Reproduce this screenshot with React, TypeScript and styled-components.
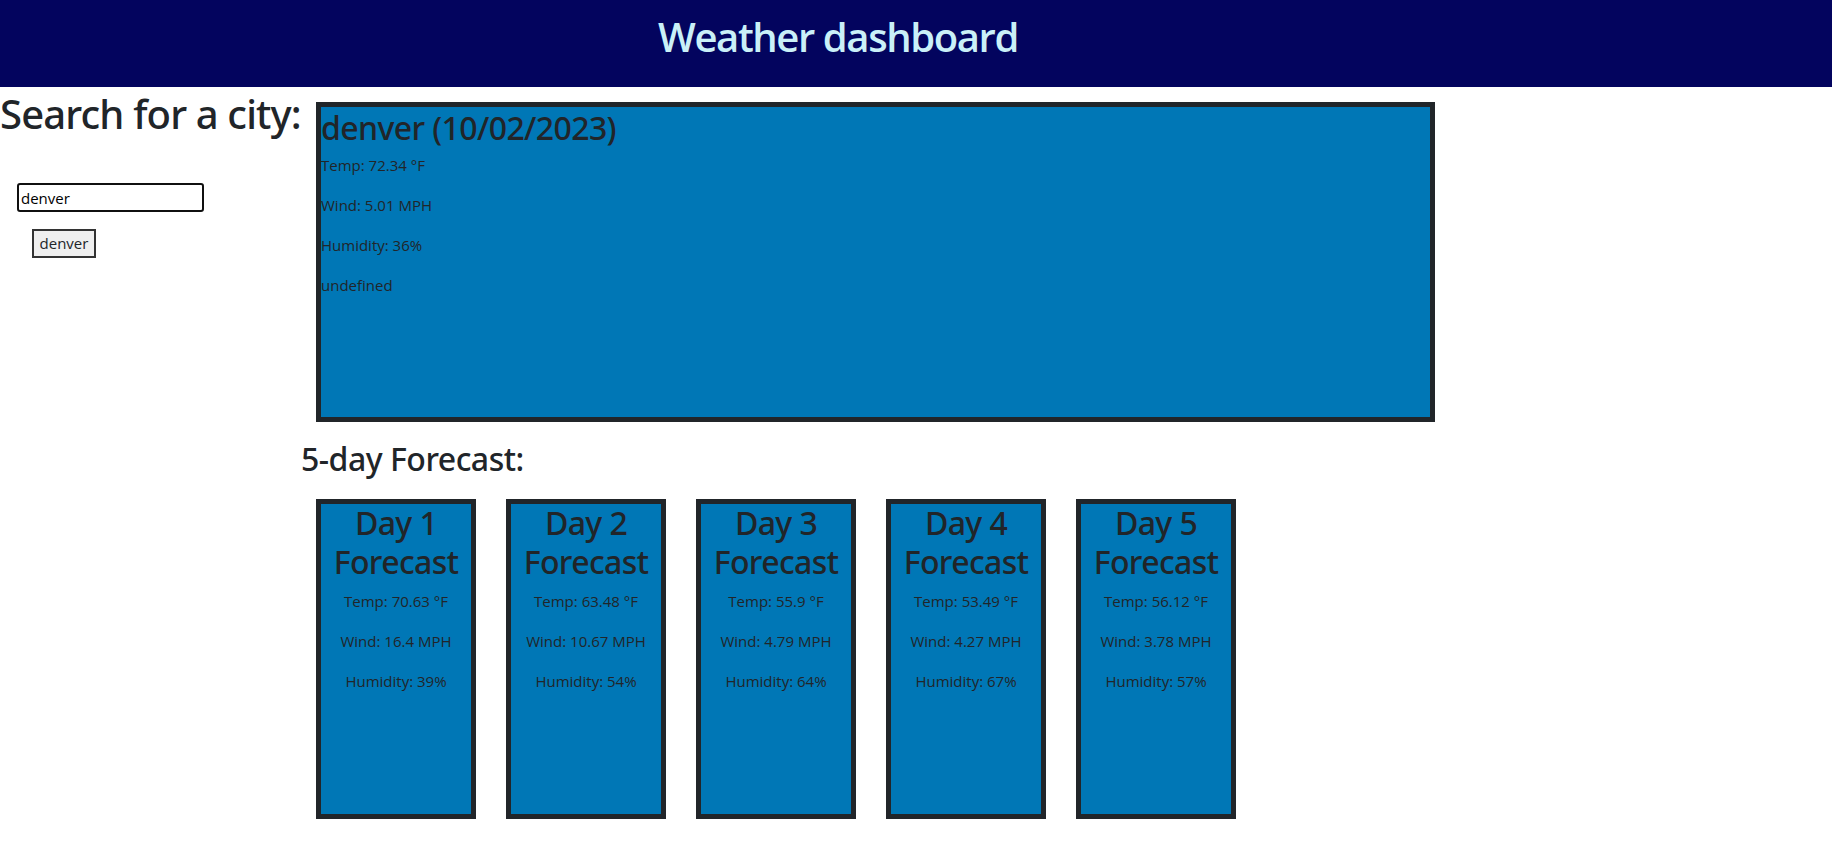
import React from "react";
import styled, { createGlobalStyle } from "styled-components";

const Global = createGlobalStyle`
  * { box-sizing: border-box; }
  html, body { margin: 0; padding: 0; background: #ffffff; }
  body {
    font-family: "Open Sans", "Noto Sans", "Liberation Sans", sans-serif;
    font-size: 16px;
    line-height: 1.5;
    color: #212529;
  }
`;

const headingFont = `"Noto Sans", "Open Sans", "Liberation Sans", sans-serif`;

const Header = styled.header`
  height: 87px;
  background: #03045e;
  display: flex;
  align-items: center;
  justify-content: center;
  padding: 0 156px 14px 0;
`;

const Title = styled.h1`
  margin: 0;
  font-family: "Open Sans", sans-serif;
  font-size: 40px;
  font-weight: 600;
  line-height: 1.2;
  letter-spacing: -1.4px;
  color: #caf0f8;
`;

const Main = styled.main`
  display: flex;
  align-items: flex-start;
`;

const Aside = styled.aside`
  width: 301px;
  flex-shrink: 0;
`;

const SearchTitle = styled.h1`
  margin: 0;
  padding-top: 3px;
  font-family: ${headingFont};
  font-size: 40px;
  font-weight: 500;
  line-height: 1.2;
  letter-spacing: -0.85px;
  white-space: nowrap;
`;

const SearchForm = styled.form`
  display: flex;
  flex-direction: column;
  align-items: flex-start;
  padding: 45px 0 0 17px;
  gap: 17px;
`;

const CityInput = styled.input`
  width: 187px;
  height: 29px;
  font: inherit;
  font-size: 15px;
  color: #000;
  padding: 1px 2px;
  border: 2px solid #101010;
  border-radius: 3px;
  outline: none;
  background: #fff;
`;

const HistoryButton = styled.button`
  margin-left: 15px;
  width: 64px;
  height: 29px;
  font: inherit;
  font-size: 15px;
  color: #212529;
  background: #efefef;
  border: 2px solid #333;
  border-radius: 0;
  padding: 0 4px;
`;

const Content = styled.section`
  flex: 1;
  display: flex;
  flex-direction: column;
  align-items: flex-start;
`;

const CurrentCard = styled.div`
  margin: 15px 0 0 15px;
  width: 1119px;
  height: 320px;
  padding-top: 2px;
  background: #0077b6;
  border: 5px solid #212529;
`;

const CardTitle = styled.h2<{ $center?: boolean }>`
  margin: 0 0 ${(p) => (p.$center ? "8px" : "6px")};
  font-family: ${headingFont};
  font-size: 32px;
  font-weight: 500;
  line-height: 1.2;
  letter-spacing: -0.6px;
  text-align: ${(p) => (p.$center ? "center" : "left")};
`;

const Stat = styled.p<{ $center?: boolean }>`
  margin: 0 0 16px;
  font-size: 15px;
  line-height: 24px;
  text-align: ${(p) => (p.$center ? "center" : "left")};
`;

const ForecastHeading = styled.h2`
  margin: 18px 0 0;
  font-family: ${headingFont};
  font-size: 32px;
  font-weight: 500;
  line-height: 1.2;
  letter-spacing: -0.5px;
`;

const ForecastRow = styled.div`
  display: flex;
  gap: 30px;
  margin: 21px 0 0 15px;
`;

const DayCard = styled.div`
  width: 160px;
  height: 320px;
  background: #0077b6;
  border: 5px solid #212529;
`;

const days = [
  { temp: "70.63", wind: "16.4", hum: "39" },
  { temp: "63.48", wind: "10.67", hum: "54" },
  { temp: "55.9", wind: "4.79", hum: "64" },
  { temp: "53.49", wind: "4.27", hum: "67" },
  { temp: "56.12", wind: "3.78", hum: "57" },
];

export default function App() {
  return (
    <>
      <Global />
      <Header>
        <Title>Weather dashboard</Title>
      </Header>
      <Main>
        <Aside>
          <SearchTitle>Search for a city:</SearchTitle>
          <SearchForm onSubmit={(e) => e.preventDefault()}>
            <CityInput type="text" defaultValue="denver" />
            <HistoryButton type="button">denver</HistoryButton>
          </SearchForm>
        </Aside>
        <Content>
          <CurrentCard>
            <CardTitle>denver (10/02/2023)</CardTitle>
            <Stat>Temp: 72.34 °F</Stat>
            <Stat>Wind: 5.01 MPH</Stat>
            <Stat>Humidity: 36%</Stat>
            <Stat>undefined</Stat>
          </CurrentCard>
          <ForecastHeading>5-day Forecast:</ForecastHeading>
          <ForecastRow>
            {days.map((d, i) => (
              <DayCard key={i}>
                <CardTitle $center>Day {i + 1} Forecast</CardTitle>
                <Stat $center>Temp: {d.temp} °F</Stat>
                <Stat $center>Wind: {d.wind} MPH</Stat>
                <Stat $center>Humidity: {d.hum}%</Stat>
              </DayCard>
            ))}
          </ForecastRow>
        </Content>
      </Main>
    </>
  );
}
